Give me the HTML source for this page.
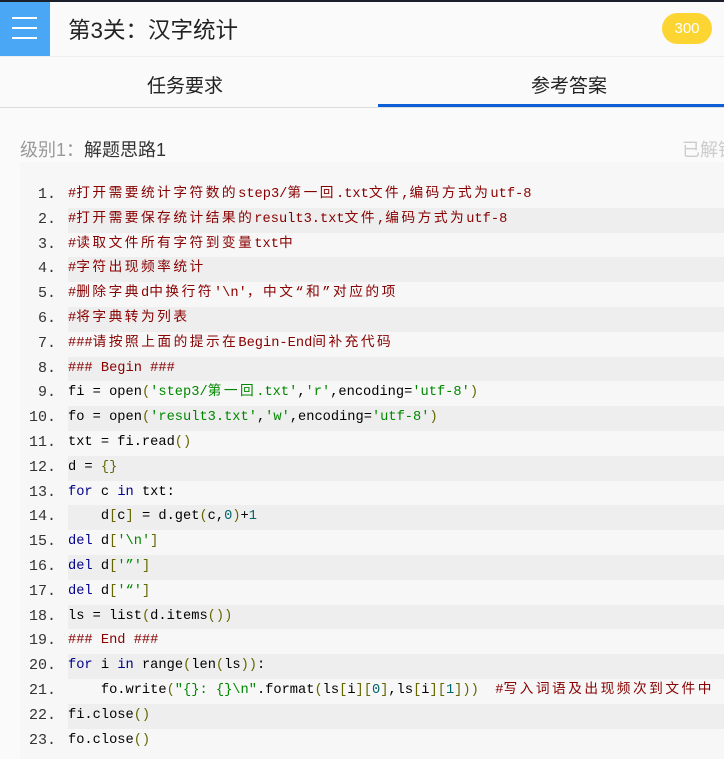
<!DOCTYPE html>
<html><head><meta charset="utf-8"><style>
body{margin:0;width:724px;height:759px;overflow:hidden;background:#fafafa;font-family:"Liberation Sans","Noto Sans CJK SC",sans-serif;position:relative}
.top{position:absolute;left:0;top:0;width:724px;height:2px;background:#1a1f2b}
.menu{position:absolute;left:0;top:2px;width:50px;height:54px;background:#4aa7f5}
.menu i{position:absolute;left:12px;width:25px;height:2px;background:#fff}
.title{position:absolute;left:68px;top:13px;font-size:22.5px;color:#222}
.badge{position:absolute;left:662px;top:13px;width:50px;height:31px;border-radius:16px;background:#fdd533;color:#fff;font-size:15px;text-align:center;line-height:31px}
.tabs{position:absolute;left:0;top:56px;width:724px;height:50px;border-top:1px solid #eee;border-bottom:1px solid #ddd;background:#fafafa}
.tab{position:absolute;top:14px;font-size:19px;color:#222}
.ul{position:absolute;left:378px;top:104px;width:346px;height:3px;background:#0c5fd4}
.lvl{position:absolute;left:20px;top:136px;font-size:18px;color:#999}
.lvl b{font-weight:normal;color:#333}
.done{position:absolute;left:682px;top:136px;font-size:18px;color:#ccc;white-space:nowrap}
.code{position:absolute;left:20px;top:162px;width:704px;height:597px;background:#f7f7f7}
.ln{position:absolute;left:0;height:24.8px;width:704px;font-family:"Liberation Mono","Noto Sans CJK SC",monospace;font-size:13.7px;line-height:24.8px;white-space:pre;color:#000}
.ln .n{position:absolute;right:668px;color:#333;font-size:15px;z-index:2}
.ln .t{position:absolute;left:48px;right:0}
.ln.e .t{background:#eee}
.z{letter-spacing:2.5px}
.c{color:#800}.k{color:#008}.s{color:#080}.p{color:#660}.d{color:#066}
</style></head><body>
<div class="top"></div>
<div class="menu"><i style="top:15px"></i><i style="top:25px"></i><i style="top:35px"></i></div>
<div class="title">第3关：汉字统计</div>
<div class="badge">300</div>
<div class="tabs"><span class="tab" style="left:147px">任务要求</span><span class="tab" style="left:531px">参考答案</span></div>
<div class="ul"></div>
<div class="lvl">级别1：<b>解题思路1</b></div>
<div class="done">已解锁</div>
<div class="code">
<div class="ln" style="top:21px"><span class="n">1.</span><span class="t"><span class="c">#<span class="z">打开需要统计字符数的</span>step3/<span class="z">第一回</span>.txt<span class="z">文件</span>,<span class="z">编码方式为</span>utf-8</span></span></div>
<div class="ln e" style="top:45.8px"><span class="n">2.</span><span class="t"><span class="c">#<span class="z">打开需要保存统计结果的</span>result3.txt<span class="z">文件</span>,<span class="z">编码方式为</span>utf-8</span></span></div>
<div class="ln" style="top:70.6px"><span class="n">3.</span><span class="t"><span class="c">#<span class="z">读取文件所有字符到变量</span>txt<span class="z">中</span></span></span></div>
<div class="ln e" style="top:95.4px"><span class="n">4.</span><span class="t"><span class="c">#<span class="z">字符出现频率统计</span></span></span></div>
<div class="ln" style="top:120.2px"><span class="n">5.</span><span class="t"><span class="c">#<span class="z">删除字典</span>d<span class="z">中换行符</span>'\n'<span class="z">，中文“和”对应的项</span></span></span></div>
<div class="ln e" style="top:145px"><span class="n">6.</span><span class="t"><span class="c">#<span class="z">将字典转为列表</span></span></span></div>
<div class="ln" style="top:169.8px"><span class="n">7.</span><span class="t"><span class="c">###<span class="z">请按照上面的提示在</span>Begin-End<span class="z">间补充代码</span></span></span></div>
<div class="ln e" style="top:194.6px"><span class="n">8.</span><span class="t"><span class="c">### Begin ###</span></span></div>
<div class="ln" style="top:219.4px"><span class="n">9.</span><span class="t">fi = open<span class="p">(</span><span class="s">'step3/<span class="z">第一回</span>.txt'</span>,<span class="s">'r'</span>,encoding=<span class="s">'utf-8'</span><span class="p">)</span></span></div>
<div class="ln e" style="top:244.2px"><span class="n">10.</span><span class="t">fo = open<span class="p">(</span><span class="s">'result3.txt'</span>,<span class="s">'w'</span>,encoding=<span class="s">'utf-8'</span><span class="p">)</span></span></div>
<div class="ln" style="top:269px"><span class="n">11.</span><span class="t">txt = fi.read<span class="p">()</span></span></div>
<div class="ln e" style="top:293.8px"><span class="n">12.</span><span class="t">d = <span class="p">{}</span></span></div>
<div class="ln" style="top:318.6px"><span class="n">13.</span><span class="t"><span class="k">for</span> c <span class="k">in</span> txt:</span></div>
<div class="ln e" style="top:343.4px"><span class="n">14.</span><span class="t">    d<span class="p">[</span>c<span class="p">]</span> = d.get<span class="p">(</span>c,<span class="d">0</span><span class="p">)</span>+<span class="d">1</span></span></div>
<div class="ln" style="top:368.2px"><span class="n">15.</span><span class="t"><span class="k">del</span> d<span class="p">[</span><span class="s">'\n'</span><span class="p">]</span></span></div>
<div class="ln e" style="top:393px"><span class="n">16.</span><span class="t"><span class="k">del</span> d<span class="p">[</span><span class="s">'”'</span><span class="p">]</span></span></div>
<div class="ln" style="top:417.8px"><span class="n">17.</span><span class="t"><span class="k">del</span> d<span class="p">[</span><span class="s">'“'</span><span class="p">]</span></span></div>
<div class="ln e" style="top:442.6px"><span class="n">18.</span><span class="t">ls = list<span class="p">(</span>d.items<span class="p">())</span></span></div>
<div class="ln" style="top:467.4px"><span class="n">19.</span><span class="t"><span class="c">### End ###</span></span></div>
<div class="ln e" style="top:492.2px"><span class="n">20.</span><span class="t"><span class="k">for</span> i <span class="k">in</span> range<span class="p">(</span>len<span class="p">(</span>ls<span class="p">))</span>:</span></div>
<div class="ln" style="top:517px"><span class="n">21.</span><span class="t">    fo.write<span class="p">(</span><span class="s">"{}: {}\n"</span>.format<span class="p">(</span>ls<span class="p">[</span>i<span class="p">][</span><span class="d">0</span><span class="p">]</span>,ls<span class="p">[</span>i<span class="p">][</span><span class="d">1</span><span class="p">]))</span>  <span class="c">#<span class="z">写入词语及出现频次到文件中</span></span></span></div>
<div class="ln e" style="top:541.8px"><span class="n">22.</span><span class="t">fi.close<span class="p">()</span></span></div>
<div class="ln" style="top:566.6px"><span class="n">23.</span><span class="t">fo.close<span class="p">()</span></span></div>
</div>
</body></html>
